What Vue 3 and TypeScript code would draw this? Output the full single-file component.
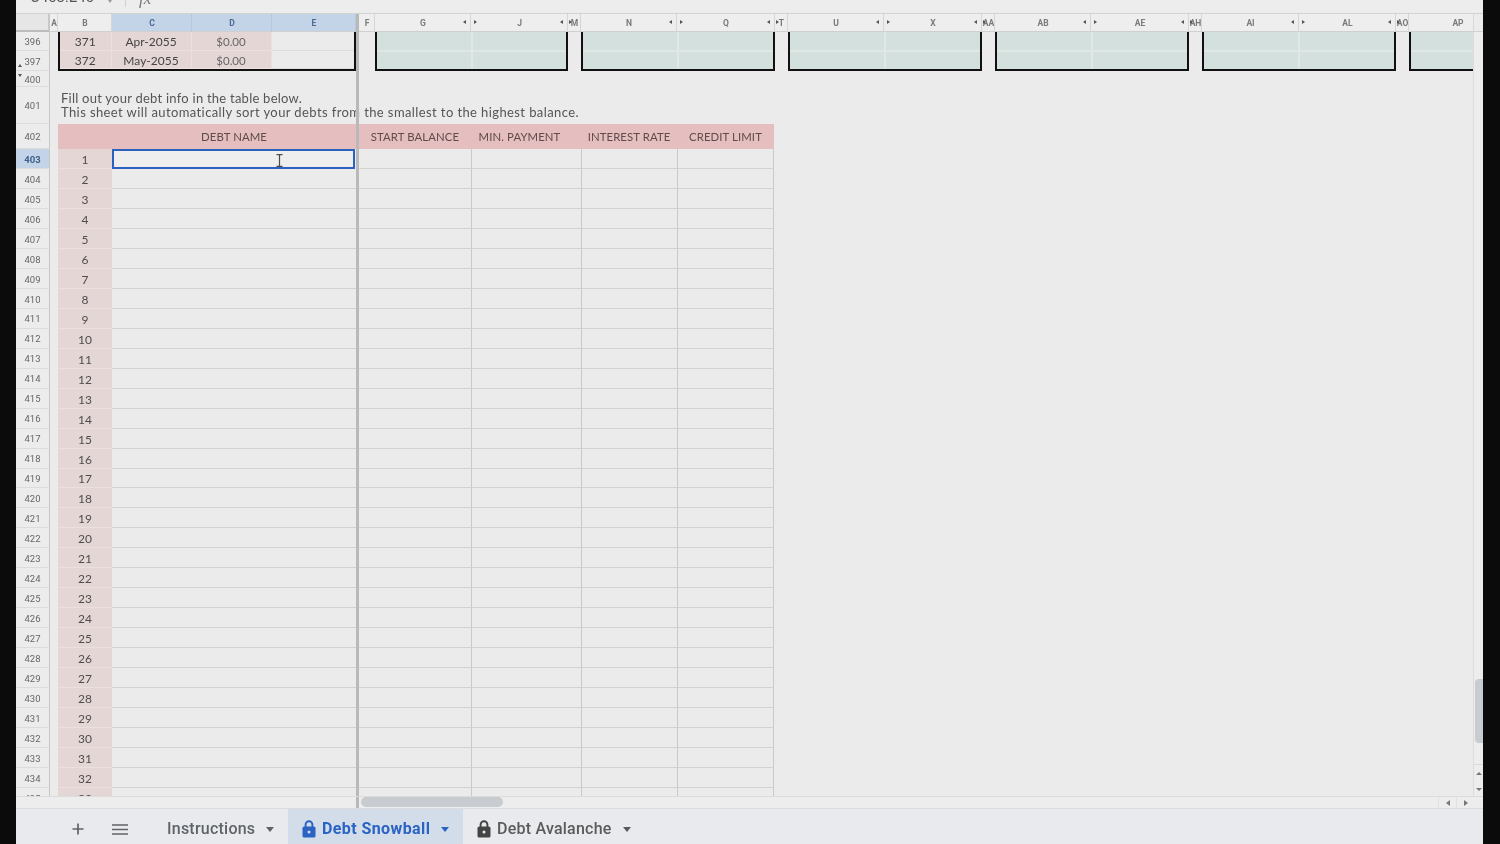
<script setup lang="ts">
interface Col { name: string; sel?: boolean; l?: boolean; r?: boolean; narrow?: boolean }
const columns: Col[] = [
  { name: 'A', narrow: true }, { name: 'B' }, { name: 'C', sel: true }, { name: 'D', sel: true }, { name: 'E', sel: true },
]
const rightColumns: Col[] = [
  { name: 'F', narrow: true }, { name: 'G', r: true }, { name: 'J', l: true, r: true }, { name: 'M', l: true, narrow: true },
  { name: 'N', r: true }, { name: 'Q', l: true, r: true }, { name: 'T', l: true, narrow: true },
  { name: 'U', r: true }, { name: 'X', l: true, r: true }, { name: 'AA', l: true, narrow: true },
  { name: 'AB', r: true }, { name: 'AE', l: true, r: true }, { name: 'AH', l: true, narrow: true },
  { name: 'AI', r: true }, { name: 'AL', l: true, r: true }, { name: 'AO', l: true, narrow: true }, { name: 'AP' },
]
const boxes = [
  { at: '9 / 11', cells: 4 }, { at: '12 / 14', cells: 4 }, { at: '15 / 17', cells: 4 },
  { at: '18 / 20', cells: 4 }, { at: '21 / 23', cells: 4 }, { at: '24 / 25', cells: 2 },
]
const payments = [
  { row: 396, no: 371, date: 'Apr-2055', amount: '$0.00' },
  { row: 397, no: 372, date: 'May-2055', amount: '$0.00' },
]
const debts = Array.from({ length: 33 }, (_, i) => ({ row: 403 + i, no: i + 1 }))
</script>

<template>
  <div class="screen">
    <div class="app">
      <div class="formula">
        <span class="name-box">C403:E40</span>
        <span class="name-caret"></span>
        <span class="formula-sep"></span>
        <span class="fx">fx</span>
      </div>

      <div class="head-wrap">
        <div class="head-clip">
          <div class="cols head">
            <div class="corner"></div>
            <div v-for="c in columns" :key="c.name" class="ch" :class="{ sel: c.sel, narrow: c.narrow }">{{ c.name }}</div>
            <div class="bar"></div>
            <div v-for="c in rightColumns" :key="c.name" class="ch" :class="{ narrow: c.narrow }">
              <span v-if="c.l" class="mark-l"></span>{{ c.name }}<span v-if="c.r" class="mark-r"></span>
            </div>
          </div>
        </div>
        <div class="head-end"></div>
      </div>

      <div class="middle">
        <div class="sheet">
          <div class="cols top">
            <template v-for="(p, i) in payments" :key="p.row">
              <div class="rh" :style="{ gridRow: i + 1 }">
                <span v-if="i === 1" class="fold-up"></span>{{ p.row }}
              </div>
            </template>
            <div class="pay-box">
              <template v-for="p in payments" :key="p.no">
                <div class="pk num">{{ p.no }}</div>
                <div class="pk num">{{ p.date }}</div>
                <div class="pk amt">{{ p.amount }}</div>
                <div class="blank"></div>
              </template>
            </div>
            <div class="bar tall"></div>
            <div v-for="b in boxes" :key="b.at" class="box" :class="{ single: b.cells === 2 }" :style="{ gridColumn: b.at }">
              <i v-for="n in b.cells" :key="n"></i>
            </div>
          </div>

          <div class="cols r400">
            <div class="rh"><span class="fold-down"></span>400</div>
            <div class="bar bar-pos"></div>
          </div>

          <div class="cols r401">
            <div class="rh">401</div>
            <div class="note">
              <div class="note-a">Fill out your debt info in the table below.</div>
              <div class="note-b">This sheet will automatically sort your debts from the smallest to the highest balance.</div>
            </div>
            <div class="bar bar-pos"></div>
          </div>

          <div class="cols r402">
            <div class="rh">402</div>
            <div class="th th-b"></div>
            <div class="th th-name">DEBT NAME</div>
            <div class="bar bar-pos"></div>
            <div class="th th-start">START BALANCE</div>
            <div class="th th-min">MIN. PAYMENT</div>
            <div class="th th-int">INTEREST RATE</div>
            <div class="th th-cred">CREDIT LIMIT</div>
          </div>

          <div v-for="d in debts" :key="d.row" class="cols drow">
            <div class="rh" :class="{ 'rh-sel': d.no === 1 }">{{ d.row }}</div>
            <div class="no">{{ d.no }}</div>
            <div class="dc dc-name" :class="{ active: d.no === 1 }"></div>
            <div class="bar bar-pos"></div>
            <div class="dc dc-start"></div>
            <div class="dc dc-min"></div>
            <div class="dc dc-int"></div>
            <div class="dc dc-cred"></div>
          </div>

          <svg class="ibeam" width="7" height="13" viewBox="0 0 7 13">
            <path d="M0.5 0.7H6.5M3.5 0.7V12.3M0.5 12.3H6.5" fill="none" stroke="#4b4b4b" stroke-width="1.2" />
          </svg>
        </div>

        <div class="vscroll">
          <div class="vthumb"></div>
          <div class="vbtns">
            <span class="tri-up"></span>
            <span class="tri-down"></span>
          </div>
        </div>
      </div>

      <div class="hscroll">
        <div class="hleft"></div>
        <div class="bar hbar"></div>
        <div class="htrack"><div class="hthumb"></div></div>
        <div class="hbtn"><span class="tri-left"></span></div>
        <div class="hbtn"><span class="tri-right"></span></div>
        <div class="hend"></div>
      </div>

      <div class="tabs">
        <button class="tool plus">
          <svg width="12" height="12" viewBox="0 0 12 12"><path d="M6 0.5V11.5M0.5 6H11.5" stroke="#5f6368" stroke-width="1.7" /></svg>
        </button>
        <button class="tool menu">
          <svg width="16" height="11" viewBox="0 0 16 11"><path d="M0 1H16M0 5.5H16M0 10H16" stroke="#5f6368" stroke-width="1.4" /></svg>
        </button>
        <div class="tab t-instr"><span>Instructions</span><span class="caret"></span></div>
        <div class="tab t-active">
          <svg class="lock" width="14" height="18" viewBox="0 0 14 18">
            <path d="M3.6 7V4.6a3.4 3.4 0 0 1 6.8 0V7" fill="none" stroke="#2a63c4" stroke-width="1.9" />
            <rect x="0.5" y="6.6" width="13" height="11" rx="1.6" fill="#2a63c4" />
            <circle cx="7" cy="12" r="1.5" fill="#d3dde9" />
          </svg>
          <span>Debt Snowball</span><span class="caret"></span>
        </div>
        <div class="tab t-aval">
          <svg class="lock" width="14" height="18" viewBox="0 0 14 18">
            <path d="M3.6 7V4.6a3.4 3.4 0 0 1 6.8 0V7" fill="none" stroke="#444" stroke-width="1.9" />
            <rect x="0.5" y="6.6" width="13" height="11" rx="1.6" fill="#444" />
            <circle cx="7" cy="12" r="1.5" fill="#e8eaed" />
          </svg>
          <span>Debt Avalanche</span><span class="caret"></span>
        </div>
      </div>
    </div>
  </div>
</template>

<style>
html, body { margin: 0; background: #0b0b0b; }
</style>

<style scoped>
.screen { width: 1500px; height: 844px; background: #0b0b0b; padding: 0 17px 0 16px; box-sizing: border-box; overflow: hidden; }
.app { width: 1467px; height: 844px; background: #ebebeb; display: flex; flex-direction: column; font-family: Lato, "Open Sans", sans-serif; color: #555; filter: blur(0.35px); }

.formula { height: 13px; flex: none; display: flex; align-items: flex-start; overflow: hidden; background: #ededed; position: relative; }
.name-box { margin: -13px 0 0 14px; font: 15px/20px Roboto, sans-serif; color: #555; width: 72px; white-space: nowrap; }
.name-caret { margin: 0 0 0 6px; width: 0; height: 0; border: 2px solid transparent; border-top: 3px solid #999; }
.formula-sep { width: 1px; height: 7px; background: #cfcfcf; margin-left: 13px; }
.fx { margin: -11px 0 0 13px; font: italic 17px/20px "Liberation Serif", serif; color: #777; }

.cols { display: grid; width: 1491px; grid-template-columns: 34px 8px 54px 80px 80px 84px 3px 16px 96px 97px 13px 96px 98px 13px 96px 98px 13px 96px 98px 13px 97px 97px 13px 98px; }

.head-wrap { display: flex; height: 19px; flex: none; border-top: 1px solid #d2d2d2; box-sizing: border-box; }
.head-clip { width: 1457px; overflow: hidden; }
.head-end { flex: 1; background: #ececec; border-left: 1px solid #d8d8d8; border-bottom: 1px solid #d2d2d2; }
.head { height: 18px; }
.corner { background: #e6e6e6; border-right: 2px solid #c8c8c8; border-bottom: 2px solid #bdbdbd; box-sizing: border-box; }
.ch { position: relative; display: flex; align-items: center; justify-content: center; padding: 1px 0 0 1px; font: 700 8.5px/1 Roboto, sans-serif; color: #7a7a7a; background: #eeeeee; border-right: 1px solid #d6d6d6; border-bottom: 1px solid #cfcfcf; box-sizing: border-box; white-space: nowrap; }
.ch.narrow { overflow: visible; }
.ch.sel { background: #c3d3e8; color: #4a6a94; border-right-color: #b7c8de; }
.mark-l, .mark-r { position: absolute; top: 6px; width: 0; height: 0; border: 2.5px solid transparent; }
.mark-l { left: 3px; border-left: 3px solid #555; border-right: 0; }
.mark-r { right: 4px; border-right: 3px solid #555; border-left: 0; }
.ch.narrow .mark-l { left: 1px; }

.bar { background: #b9b9b9; grid-column: 7; }
.bar.tall { grid-row: 1 / 3; }
.bar-pos { grid-row: 1; }

.middle { flex: 1; min-height: 0; display: flex; }
.sheet { position: relative; width: 1457px; overflow: hidden; }
.vscroll { flex: 1; display: flex; flex-direction: column; border-left: 1px solid #dcdcdc; background: #ededed; }
.vthumb { height: 64px; margin: 647px 0 0 1px; background: #c8cbcf; border-radius: 4px 0 0 4px; flex: none; }
.vbtns { margin-top: 21px; height: 32px; flex: none; border-top: 1px solid #dcdcdc; display: flex; flex-direction: column; align-items: center; justify-content: space-around; }
.tri-up, .tri-down { width: 0; height: 0; border: 3px solid transparent; border-top: 0; border-bottom: 3px solid #777; }
.tri-down { border-bottom: 0; border-top: 3px solid #777; }

.rh { grid-column: 1; display: flex; align-items: center; justify-content: center; position: relative; padding-top: 2px; font: 9.5px/1 Roboto, sans-serif; color: #666; background: #ececec; border-right: 1px solid #c6c6c6; border-bottom: 1px solid #dcdcdc; box-sizing: border-box; }
.rh-sel { background: #c3d3e8; color: #3f5f8a; font-weight: 700; }
.fold-up, .fold-down { position: absolute; left: 2px; width: 0; height: 0; border: 2.5px solid transparent; }
.fold-up { bottom: 3px; border-top: 0; border-bottom: 3px solid #555; }
.fold-down { top: 3px; border-bottom: 0; border-top: 3px solid #555; }

.top { grid-template-rows: 19px 20px; }
.pay-box { grid-column: 3 / 7; grid-row: 1 / 3; display: grid; grid-template-columns: 51.5px 80px 80px 82px; grid-auto-rows: 18.5px; border: solid #111; border-width: 0 2px 2.5px 2.5px; box-sizing: border-box; }
.pk { background: #e5d6d6; padding-top: 2px; display: flex; align-items: center; justify-content: center; border-right: 1px solid #ebdfdf; border-bottom: 1px solid #ebdfdf; box-sizing: border-box; }
.num { font-size: 12px; color: #444; }
.amt { font-size: 11.5px; color: #666; }
.blank { border-bottom: 1px solid #dcdcdc; }
.box { grid-row: 1 / 3; display: grid; grid-template-columns: 1fr 1fr; grid-auto-rows: 1fr; gap: 2px; background: #e0e8e6; border: solid #111; border-width: 0 2.5px 2.5px 2.5px; box-sizing: border-box; }
.box.single { grid-template-columns: 1fr; border-right: 0; }
.box i { background: #d4e0de; }

.r400 { height: 16px; }
.r401 { height: 37px; }
.r402 { height: 25px; }
.note { grid-column: 3 / 7; grid-row: 1; padding: 4px 0 0 3px; font-size: 13px; line-height: 14px; color: #555; white-space: nowrap; }
.note-a { letter-spacing: 0.24px; }
.note-b { letter-spacing: 0.4px; }
.th { background: #e5bfbf; color: #5f4b4b; font-size: 11.35px; display: flex; align-items: center; justify-content: center; white-space: nowrap; letter-spacing: 0.1px; }
.th-b { grid-column: 2 / 4; margin-left: 8px; }
.th-name { grid-column: 4 / 7; }
.th-start { grid-column: 8 / 10; }
.th-min { grid-column: 10 / 12; padding-right: 13px; }
.th-int { grid-column: 12; }
.th-cred { grid-column: 13; margin-right: 1px; }

.drow { height: 19.97px; }
.no { grid-column: 3; padding-top: 2px; background: #e5d6d6; border-bottom: 1px solid #ebdfdf; box-sizing: border-box; display: flex; align-items: center; justify-content: center; font-size: 12px; color: #4d4d4d; }
.dc { border-bottom: 1px solid #d2d2d2; box-sizing: border-box; }
.dc-name { grid-column: 4 / 7; }
.dc-start { grid-column: 8 / 10; }
.dc-min { grid-column: 10 / 12; border-left: 1px solid #c9c9c9; }
.dc-int { grid-column: 12; border-left: 1px solid #c9c9c9; }
.dc-cred { grid-column: 13; border-left: 1px solid #c9c9c9; border-right: 1px solid #c9c9c9; margin-right: 1px; }
.active { border: 2px solid #2b62c0; background: #eeeeee; margin-right: 1px; }

.ibeam { position: absolute; left: 260px; top: 122px; }

.hscroll { height: 13px; flex: none; display: flex; background: #ededed; border-top: 1px solid #dcdcdc; border-bottom: 1px solid #dcdcdc; box-sizing: border-box; }
.hleft { width: 340px; }
.hbar { width: 3px; }
.htrack { width: 1079px; padding: 0 0 0 2px; box-sizing: border-box; }
.hthumb { width: 142px; height: 10px; border-radius: 5px; background: #c8cbcf; }
.hbtn { width: 18px; display: flex; align-items: center; justify-content: center; border-left: 1px solid #e0e0e0; box-sizing: border-box; }
.tri-left, .tri-right { width: 0; height: 0; border: 3px solid transparent; }
.tri-left { border-left: 0; border-right: 4px solid #777; }
.tri-right { border-right: 0; border-left: 4px solid #777; }
.hend { flex: 1; }

.tabs { flex: none; height: 35px; display: flex; align-items: stretch; background: #e8eaed; font: 500 16px/1 Roboto, sans-serif; letter-spacing: 0.23px; color: #5f6368; }
.tool { width: 24px; padding: 5px 0 0; border: 0; background: none; display: flex; align-items: center; justify-content: center; }
.plus { margin-left: 50px; }
.menu { margin-left: 18px; }
.tab { display: flex; align-items: center; white-space: nowrap; padding-top: 5px; }
.caret { width: 0; height: 0; border: 4.5px solid transparent; border-bottom: 0; border-top: 5px solid currentColor; margin-left: 11px; }
.t-instr { width: 136px; margin-left: 20px; padding-left: 15px; box-sizing: border-box; }
.t-active { width: 175px; padding-left: 14px; box-sizing: border-box; background: #d3dde9; color: #2a63c4; font-weight: 700; letter-spacing: 0.4px; }
.t-aval { padding-left: 14px; color: #5a5a5a; }
.lock { margin-right: 6px; flex: none; }
</style>
